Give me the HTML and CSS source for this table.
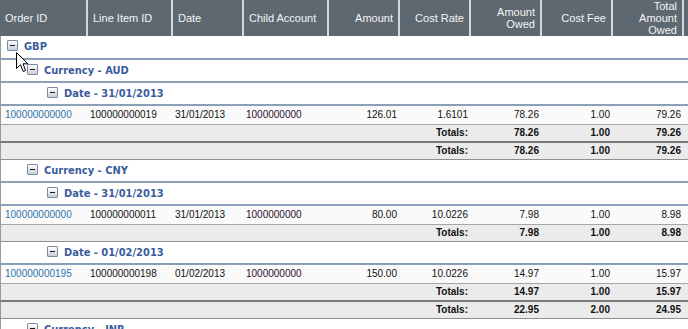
FILE: index.html
```html
<!DOCTYPE html>
<html lang="en">

<head>
    <meta charset="UTF-8">
    <title>Billing Report</title>
    <link rel="stylesheet" href="styles.css">
</head>

<body>

    <table class="report">
        <colgroup>
            <col class="w-id">
            <col class="w-id2">
            <col class="w-sm">
            <col class="w-id2">
            <col class="w-sm">
            <col class="w-sm">
            <col class="w-sm">
            <col class="w-sm">
            <col class="w-sm">
            <col class="w-sm">
        </colgroup>
        <thead>
            <tr>
                <th>Order ID</th>
                <th>Line Item ID</th>
                <th>Date</th>
                <th>Child Account</th>
                <th class="num">Amount</th>
                <th class="num">Cost Rate</th>
                <th class="num">Amount Owed</th>
                <th class="num">Cost Fee</th>
                <th class="num">Total Amount Owed</th>
                <th></th>
            </tr>
        </thead>
        <tbody>
            <tr class="group lvl0">
                <td colspan="10"><span class="toggle"></span>GBP</td>
            </tr>
            <tr class="group lvl1">
                <td colspan="10"><span class="toggle"></span>Currency - AUD</td>
            </tr>
            <tr class="group lvl2">
                <td colspan="10"><span class="toggle"></span>Date - 31/01/2013</td>
            </tr>
            <tr class="item">
                <td class="link">100000000000</td>
                <td>100000000019</td>
                <td>31/01/2013</td>
                <td class="acct">1000000000</td>
                <td class="num">126.01</td>
                <td class="num">1.6101</td>
                <td class="num">78.26</td>
                <td class="num">1.00</td>
                <td class="num">79.26</td>
                <td></td>
            </tr>
            <tr class="totals sub">
                <td></td><td></td><td></td><td></td><td></td>
                <td class="num">Totals:</td>
                <td class="num">78.26</td>
                <td class="num">1.00</td>
                <td class="num">79.26</td>
                <td></td>
            </tr>
            <tr class="totals">
                <td></td><td></td><td></td><td></td><td></td>
                <td class="num">Totals:</td>
                <td class="num">78.26</td>
                <td class="num">1.00</td>
                <td class="num">79.26</td>
                <td></td>
            </tr>
            <tr class="group lvl1">
                <td colspan="10"><span class="toggle"></span>Currency - CNY</td>
            </tr>
            <tr class="group lvl2">
                <td colspan="10"><span class="toggle"></span>Date - 31/01/2013</td>
            </tr>
            <tr class="item">
                <td class="link">100000000000</td>
                <td>100000000011</td>
                <td>31/01/2013</td>
                <td class="acct">1000000000</td>
                <td class="num">80.00</td>
                <td class="num">10.0226</td>
                <td class="num">7.98</td>
                <td class="num">1.00</td>
                <td class="num">8.98</td>
                <td></td>
            </tr>
            <tr class="totals">
                <td></td><td></td><td></td><td></td><td></td>
                <td class="num">Totals:</td>
                <td class="num">7.98</td>
                <td class="num">1.00</td>
                <td class="num">8.98</td>
                <td></td>
            </tr>
            <tr class="group lvl2">
                <td colspan="10"><span class="toggle"></span>Date - 01/02/2013</td>
            </tr>
            <tr class="item">
                <td class="link">100000000195</td>
                <td>100000000198</td>
                <td>01/02/2013</td>
                <td class="acct">1000000000</td>
                <td class="num">150.00</td>
                <td class="num">10.0226</td>
                <td class="num">14.97</td>
                <td class="num">1.00</td>
                <td class="num">15.97</td>
                <td></td>
            </tr>
            <tr class="totals sub">
                <td></td><td></td><td></td><td></td><td></td>
                <td class="num">Totals:</td>
                <td class="num">14.97</td>
                <td class="num">1.00</td>
                <td class="num">15.97</td>
                <td></td>
            </tr>
            <tr class="totals">
                <td></td><td></td><td></td><td></td><td></td>
                <td class="num">Totals:</td>
                <td class="num">22.95</td>
                <td class="num">2.00</td>
                <td class="num">24.95</td>
                <td></td>
            </tr>
            <tr class="group lvl1">
                <td colspan="10"><span class="toggle"></span>Currency - INR</td>
            </tr>
        </tbody>
    </table>

    <!-- mouse pointer captured in the screenshot -->
    <svg class="cursor" width="13" height="21" viewBox="0 0 13 21">
        <polygon points="0.5,0.5 0.5,16.5 4.5,12.8 7.2,19.5 9.6,18.5 7,11.8 12,11.8" fill="#fff" stroke="#000" stroke-width="1" stroke-linejoin="miter"/>
    </svg>

</body>

</html>
```

FILE: styles.css
```css
html,
body {
    margin: 0;
    overflow: hidden;
}

body {
    background: #fff;
    font-family: "Liberation Sans", Arial, sans-serif;
    font-size: 10px;
    color: #111;
}

.report {
    border-collapse: separate;
    border-spacing: 0;
    table-layout: fixed;
    width: 753px;
}

.w-id { width: 86px; }
.w-id2 { width: 85px; }
.w-sm { width: 71px; }

/* header */
.report th {
    height: 36px;
    padding: 0 5px;
    background: #5e6870;
    color: #f4f4f4;
    font-size: 11px;
    font-weight: normal;
    line-height: 12px;
    text-align: left;
    vertical-align: middle;
    border-left: 2px solid #d3d8dc;
}

.report th:first-child {
    border-left: none;
}

.report .num {
    text-align: right;
}

.report td {
    padding: 0 1px 0 4px;
    white-space: nowrap;
    overflow: hidden;
}

.report td:first-child {
    border-left: 1px solid #9a9a9a;
}

/* grouping rows */
.group td {
    background: #fff;
    line-height: 21px;
    border-bottom: 2px solid #8b9fb7;
    color: #3b5c9c;
    font-family: "DejaVu Sans Condensed", "DejaVu Sans", sans-serif;
    font-size: 11px;
    font-weight: bold;
}

.group.lvl0 td {
    line-height: 22px;
    padding-left: 6px;
}

.group.lvl1 td {
    padding-left: 26px;
}

.group.lvl2 td {
    padding-left: 46px;
}

.toggle {
    display: inline-block;
    position: relative;
    width: 9px;
    height: 9px;
    margin-right: 6px;
    vertical-align: -1px;
    border: 1px solid #7c8a9d;
    border-radius: 1px;
    background: linear-gradient(#ffffff, #c6cfdb);
}

.toggle::after {
    content: "";
    position: absolute;
    left: 2px;
    top: 4px;
    width: 5px;
    height: 1px;
    background: #1a1a1a;
}

/* detail rows */
.item td {
    background: #fafafa;
    line-height: 18px;
    border-bottom: 1px solid #a6a6a6;
}

.item .link {
    color: #2f74a8;
}

.item .acct {
    color: #2c0f2c;
}

/* totals */
.totals td {
    background: #ebebeb;
    line-height: 16px;
    font-weight: bold;
    border-bottom: 1px solid #8e8e8e;
}

.totals.sub td {
    border-bottom: 2px solid #7b7b7b;
}

.cursor {
    position: absolute;
    left: 16px;
    top: 52px;
}
```
